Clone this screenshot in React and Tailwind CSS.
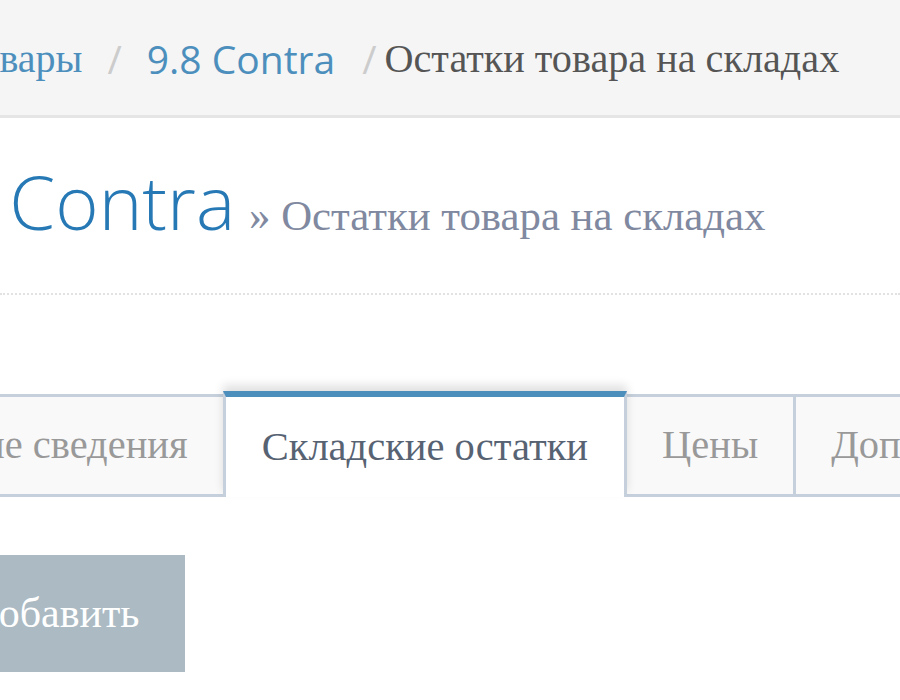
import React from "react";

const sans = "font-['Open_Sans',sans-serif]";
const serif = "font-['Liberation_Serif',serif]";

const Crumbs = () => (
  <div className="h-[118px] bg-[#f5f5f5] border-b-[3px] border-[#e5e5e5] flex items-center overflow-hidden">
    <ul className={`flex items-center ml-[-42px] pt-[4px] text-[39px] whitespace-nowrap ${sans}`}>
      <li className={`${serif} text-[40px] text-[#4c8fbd]`}>Товары</li>
      <li className="text-[#cccccc] px-[25px]">/</li>
      <li className="text-[#4c8fbd]">9.8 Contra</li>
      <li className="text-[#cccccc] pl-[27px] pr-[8px]">/</li>
      <li className={`${serif} text-[40.2px] text-[#555555]`}>Остатки товара на складах</li>
    </ul>
  </div>
);

const Tab = ({ label, active }) =>
  active ? (
    <li className="relative z-10 -ml-[3px] h-[106px] flex items-center px-[36px] bg-white border-x-[3px] border-t-[6px] border-x-[#c5d0dc] border-t-[#4c8fbd] text-[#576373] shadow-[0_-6px_9px_rgba(0,0,0,0.12)]">
      {label}
    </li>
  ) : (
    <li className="-ml-[3px] h-[103px] flex items-center px-[35px] bg-[#f9f9f9] border-[3px] border-[#c5d0dc] text-[#999999]">
      {label}
    </li>
  );

export default function App() {
  const tabs = ["Общие сведения", "Складские остатки", "Цены", "Дополнительно"];
  return (
    <div className="w-[900px] h-[700px] overflow-hidden bg-white">
      <Crumbs />
      <div className="mt-[47px] pb-[45px] border-b-[2px] border-dotted border-[#e2e2e2] flex items-baseline whitespace-nowrap overflow-hidden">
        <h1 className={`ml-[-112px] text-[74px] leading-none font-light text-[#2679b5] ${sans}`}>9.8 Contra</h1>
        <span className={`ml-[14px] text-[42.8px] text-[#8089a0] ${serif}`}>» Остатки товара на складах</span>
      </div>
      <ul className={`mt-[96px] flex items-end whitespace-nowrap text-[40.5px] ml-[-133px] ${serif}`}>
        {tabs.map((t) => (
          <Tab key={t} label={t} active={t === "Складские остатки"} />
        ))}
      </ul>
      <div className="mt-[58px] ml-[-76px]">
        <button className={`h-[117px] px-[46px] bg-[#abbac3] text-white text-[42px] ${serif}`}>Добавить</button>
      </div>
    </div>
  );
}
